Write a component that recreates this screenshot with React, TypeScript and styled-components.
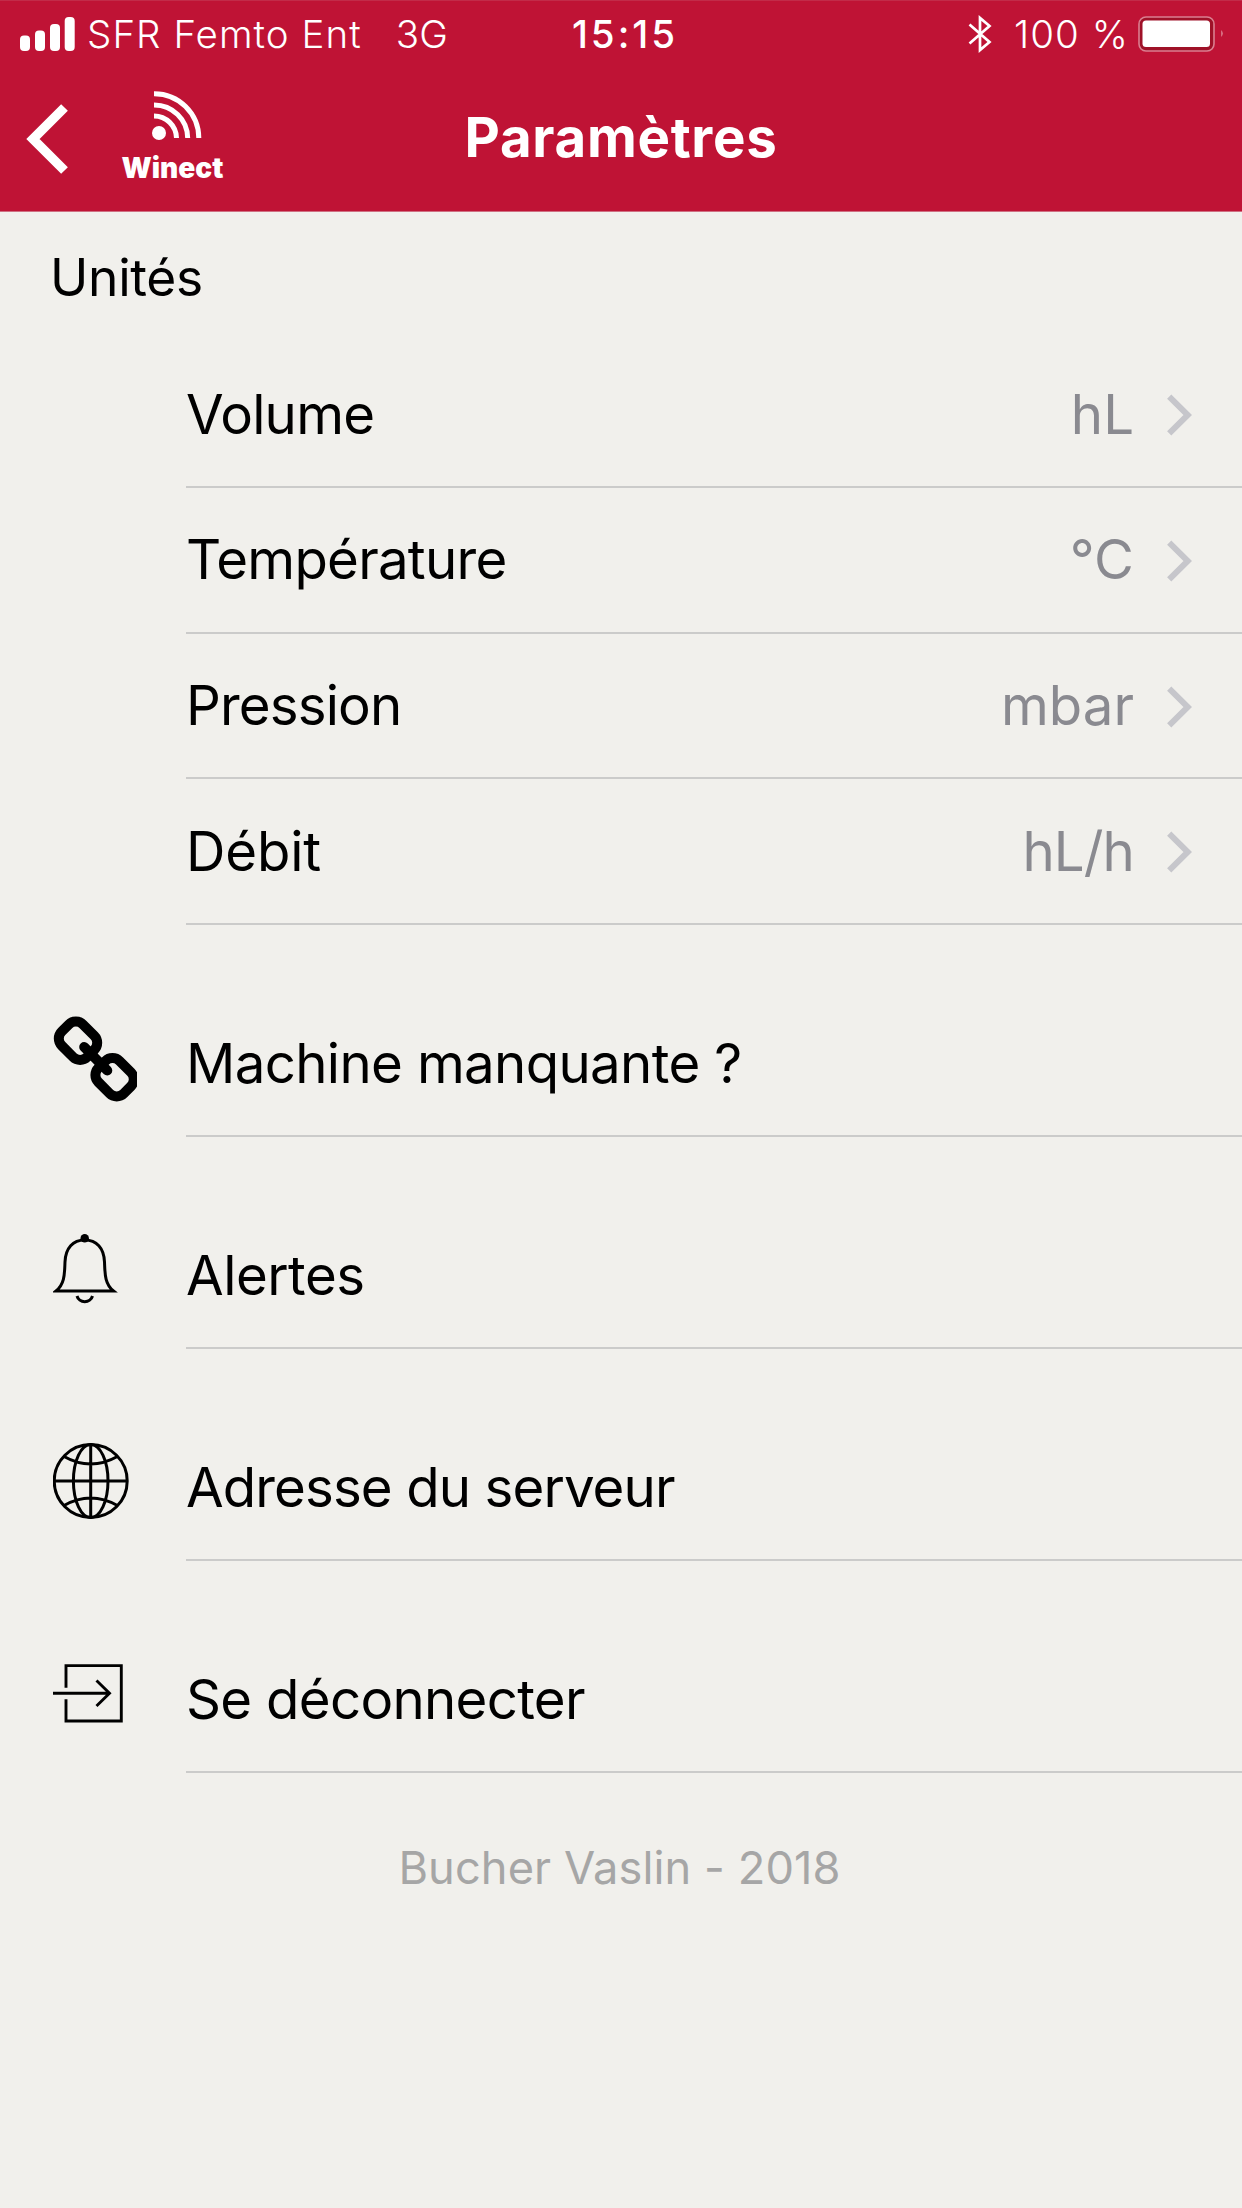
import React from 'react';
import styled, { createGlobalStyle } from 'styled-components';

const GlobalStyle = createGlobalStyle`
  * { box-sizing: border-box; }
  html, body { margin: 0; padding: 0; background: #f1f0ec; }
  body { font-family: Inter, "Liberation Sans", sans-serif; color: #000; }
  svg { display: block; flex: none; }
`;

const Screen = styled.main`
  width: 1242px;
  height: 2208px;
  overflow: hidden;
  background: #f1f0ec;
`;

const Header = styled.header`
  height: 212px;
  background: #bf1335;
  border-top: 1px solid #c22b49;
  border-bottom: 1px solid #cf7083;
  color: #fff;
`;

const StatusBar = styled.div`
  display: grid;
  grid-template-columns: 1fr auto 1fr;
  align-items: center;
  height: 66px;
  padding: 0 18px 0 20px;
  font-size: 38.5px;
  line-height: 66px;
  white-space: pre;
`;

const StatusGroup = styled.div<{ $end?: boolean }>`
  display: flex;
  align-items: center;
  justify-content: ${(p) => (p.$end ? 'flex-end' : 'flex-start')};
`;

const StatusText = styled.span<{ $ml?: number; $ls?: number; $weight?: number }>`
  margin-left: ${(p) => p.$ml ?? 0}px;
  letter-spacing: ${(p) => p.$ls ?? 0}px;
  font-weight: ${(p) => p.$weight ?? 300};
`;

const NavBar = styled.nav`
  display: grid;
  grid-template-columns: 95px 1fr auto 1fr 95px;
  height: 144px;
`;

const BackButton = styled.button`
  padding: 0 0 0 26px;
  border: 0;
  background: none;
`;

const Brand = styled.div`
  display: flex;
  flex-direction: column;
  align-items: flex-start;
  padding: 24px 0 0 26.5px;
`;

const BrandMark = styled.div`
  padding-left: 30px;
`;

const BrandName = styled.span`
  font-size: 28px;
  font-weight: 900;
  line-height: 34px;
  margin-top: 11px;
`;

const Title = styled.h1`
  margin: 0;
  font-size: 54.6px;
  font-weight: 650;
  line-height: 140px;
  letter-spacing: 0.7px;
`;

const SectionTitle = styled.h2`
  margin: 0;
  height: 130.3px;
  padding: 31px 0 0 50px;
  font-size: 51.5px;
  font-weight: 400;
  line-height: 68px;
  letter-spacing: -0.3px;
`;

const Row = styled.div<{ $gap?: boolean }>`
  display: grid;
  grid-template-columns: 186px 1fr;
  height: 145.7px;
  margin-top: ${(p) => (p.$gap ? 66.3 : 0)}px;
`;

const IconCell = styled.div`
  padding: 25px 0 0 53px;
`;

const RowBody = styled.div`
  display: flex;
  align-items: center;
  justify-content: space-between;
  padding: 0 50px 1px 0;
  border-bottom: 2px solid #cbcbca;
  font-size: 54.6px;
  line-height: 66px;
`;

const Label = styled.span<{ $ls?: number }>`
  letter-spacing: ${(p) => p.$ls ?? 0}px;
  white-space: pre;
`;

const Value = styled.span<{ $ls?: number }>`
  display: flex;
  align-items: center;
  gap: 32px;
  color: #8a8a90;
  letter-spacing: ${(p) => p.$ls ?? 0}px;

  svg {
    margin-top: 3px;
  }
`;

const Footer = styled.footer`
  padding: 65px 3px 0 0;
  text-align: center;
  font-size: 45.2px;
  line-height: 60px;
  letter-spacing: 0.1px;
  color: #a6a6a6;
`;

const SignalIcon = () => (
  <svg width="56" height="34" viewBox="0 0 56 34" fill="#fff">
    <rect x="0" y="18.5" width="10" height="15.5" rx="4" />
    <rect x="15" y="13.5" width="10" height="20.5" rx="4" />
    <rect x="30" y="7" width="10" height="27" rx="4" />
    <rect x="44.7" y="0" width="10" height="34" rx="4" />
  </svg>
);

const BluetoothIcon = () => (
  <svg width="24" height="38" viewBox="0 0 24 38" fill="none" stroke="#fff" strokeWidth="2.7">
    <path d="M1.5 9.5 L21.5 27 L12 35 V3 L21.5 11 L1.5 28.5" />
  </svg>
);

const BatteryIcon = () => (
  <svg width="86" height="36" viewBox="0 0 86 36">
    <rect x="1" y="1" width="75" height="34" rx="7" fill="#9f1128" stroke="#da7f90" strokeWidth="1.6" />
    <rect x="4.5" y="4.5" width="67.5" height="26.5" rx="3.5" fill="#fff" />
    <path d="M83 14 Q87 17.5 83 21 Z" fill="#d76c80" />
  </svg>
);

const BackIcon = () => (
  <svg width="43" height="70" viewBox="0 0 43 70" fill="none" stroke="#fff" strokeWidth="9.5">
    <path d="M38.5 3.5 L7 35 L38.5 66.5" />
  </svg>
);

const WaveIcon = () => (
  <svg width="50" height="49" viewBox="0 0 50 49" fill="none" stroke="#fff" strokeWidth="5">
    <circle cx="7" cy="42" r="7" fill="#fff" stroke="none" />
    <path d="M2 25 A22.5 22.5 0 0 1 24.5 47" />
    <path d="M2 14 A33.5 33.5 0 0 1 35.7 47" />
    <path d="M2 2.7 A44.5 44.5 0 0 1 46.8 47" />
  </svg>
);

const ChevronIcon = () => (
  <svg width="26" height="42" viewBox="0 0 26 42" fill="none" stroke="#c6c6cb" strokeWidth="6">
    <path d="M3.2 2.6 L21.8 21 L3.2 39.4" />
  </svg>
);

const LinkIcon = () => (
  <svg width="83.5" height="88" viewBox="0 0 83.5 88" fill="none" stroke="#000" strokeWidth="10" strokeLinecap="round">
    <rect x="-15" y="-18" width="30" height="36" rx="10" transform="translate(25 24.7) rotate(-45)" />
    <rect x="-15" y="-18" width="30" height="36" rx="10" transform="translate(61.6 61.2) rotate(-45)" />
    <path d="M31.2 31 L54.3 54.5" />
  </svg>
);

const BellIcon = () => (
  <svg width="84" height="88" viewBox="0 0 84 88" fill="none" stroke="#000" strokeWidth="3">
    <path d="M3 63 C12 56 11.5 45 12 34 C12.5 20 20 12 31.7 12 C43.5 12 51 20 51.5 34 C52 45 51.5 56 60.5 63 Z" />
    <circle cx="31.7" cy="10.2" r="4.2" fill="#000" stroke="none" />
    <path d="M24 68 A8 7.5 0 0 0 39.5 68" />
  </svg>
);

const GlobeIcon = () => (
  <svg width="84" height="88" viewBox="0 0 84 88" fill="none" stroke="#000" strokeWidth="3">
    <circle cx="37.7" cy="41" r="36.5" />
    <ellipse cx="37.7" cy="41" rx="17.3" ry="36.5" />
    <path d="M37.7 4.5 V77.5 M1.2 41 H74.2 M11 16.5 Q37.7 31.5 64.4 16.5 M11 65.500 Q37.7 50.500 64.4 65.500" />
  </svg>
);

const LogoutIcon = () => (
  <svg width="84" height="88" viewBox="0 0 84 88" fill="none" stroke="#000" strokeWidth="2.9">
    <path d="M13 35.8 V13.6 H68.3 V69 H13 V47.3" />
    <path d="M0 41.300 H56 M43.5 28.500 L56.5 41.300 L43.5 54" />
  </svg>
);

const units = [
  { label: 'Volume', value: 'hL', ls: -0.75, vls: 0 },
  { label: 'Température', value: '°C', ls: -0.75, vls: 0 },
  { label: 'Pression', value: 'mbar', ls: -0.85, vls: 0 },
  { label: 'Débit', value: 'hL/h', ls: -0.15, vls: -0.9 },
];

const actions = [
  { label: 'Machine manquante ?', Icon: LinkIcon, ls: -0.65 },
  { label: 'Alertes', Icon: BellIcon, ls: -0.5 },
  { label: 'Adresse du serveur', Icon: GlobeIcon, ls: -0.9 },
  { label: 'Se déconnecter', Icon: LogoutIcon, ls: -0.7 },
];

export default function App() {
  return (
    <Screen>
      <GlobalStyle />
      <Header>
        <StatusBar>
          <StatusGroup>
            <SignalIcon />
            <StatusText $ml={11} $ls={1.05}>SFR Femto Ent</StatusText>
            <StatusText $ml={34}>3G</StatusText>
          </StatusGroup>
          <StatusText $ml={6} $weight={450} $ls={3}>15:15</StatusText>
          <StatusGroup $end>
            <BluetoothIcon />
            <StatusText $ml={22} $ls={1.1}>100 %</StatusText>
            <StatusText $ml={9}><BatteryIcon /></StatusText>
          </StatusGroup>
        </StatusBar>
        <NavBar>
          <BackButton aria-label="Retour"><BackIcon /></BackButton>
          <Brand>
            <BrandMark><WaveIcon /></BrandMark>
            <BrandName>Winect</BrandName>
          </Brand>
          <Title>Paramètres</Title>
        </NavBar>
      </Header>
      <SectionTitle>Unités</SectionTitle>
      {units.map((u) => (
        <Row key={u.label}>
          <IconCell />
          <RowBody>
            <Label $ls={u.ls}>{u.label}</Label>
            <Value $ls={u.vls}>
              {u.value}
              <ChevronIcon />
            </Value>
          </RowBody>
        </Row>
      ))}
      {actions.map(({ label, Icon, ls }) => (
        <Row key={label} $gap>
          <IconCell><Icon /></IconCell>
          <RowBody><Label $ls={ls}>{label}</Label></RowBody>
        </Row>
      ))}
      <Footer>Bucher Vaslin - 2018</Footer>
    </Screen>
  );
}
